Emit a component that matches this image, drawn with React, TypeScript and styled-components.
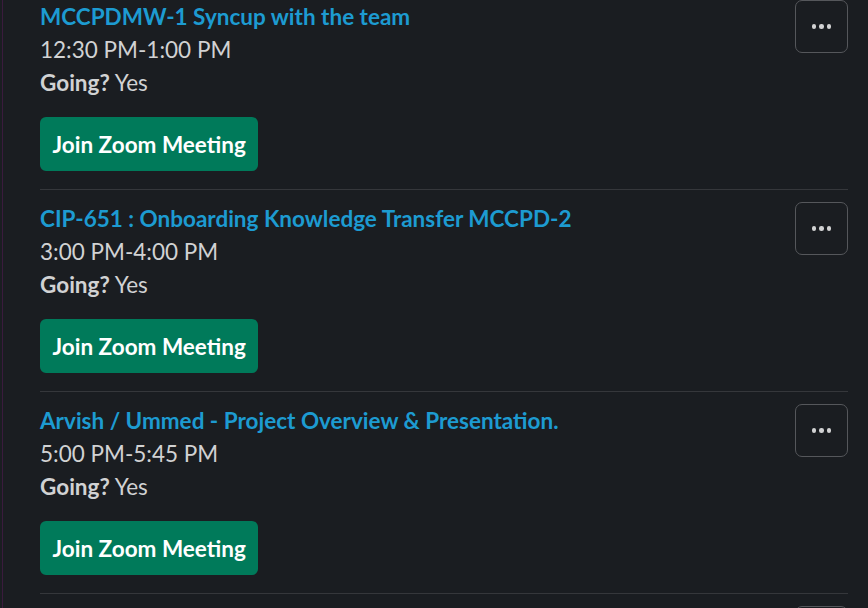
import React from "react";
import styled, { createGlobalStyle } from "styled-components";

const Global = createGlobalStyle`
  html, body { margin: 0; padding: 0; background: #1a1d21; overflow: hidden; }
  body { font-family: Lato, "Noto Sans", sans-serif; }
`;

const Root = styled.div`
  height: 608px;
  padding-left: 2px;
  background: #1a1d21;
  overflow: hidden;
`;

const Pane = styled.div`
  height: 100%;
  border-left: 1px solid #3a1b3d;
  padding: 0 20px 0 37px;
  display: flex;
  flex-direction: column;
`;

const Item = styled.div<{ $first?: boolean }>`
  display: flex;
  align-items: flex-start;
  gap: 12px;
  padding: ${(p) => (p.$first ? "0" : "12px")} 0 18px;
  border-bottom: 1px solid #35373b;
`;

const Body = styled.div`
  flex: 1;
  display: flex;
  flex-direction: column;
  align-items: flex-start;
`;

const Title = styled.a`
  font-size: 22.5px;
  line-height: 33px;
  font-weight: 700;
  color: #1d9bd1;
  text-decoration: none;
`;

const Line = styled.div`
  font-size: 22.5px;
  line-height: 33px;
  color: #d1d2d3;
`;

const Bold = styled.b`
  font-weight: 700;
`;

const JoinButton = styled.button`
  margin-top: 18px;
  height: 54px;
  padding: 0 12.5px;
  border: none;
  border-radius: 6px;
  background: #007a5a;
  color: #ffffff;
  font-family: Lato, "Noto Sans", sans-serif;
  font-size: 22.5px;
  font-weight: 700;
  cursor: pointer;
`;

const MoreButton = styled.button`
  flex: none;
  width: 53px;
  height: 53px;
  border: 1.5px solid #55575b;
  border-radius: 7px;
  background: transparent;
  display: flex;
  align-items: center;
  justify-content: center;
  gap: 3px;
  padding: 0;
`;

const Dot = styled.span`
  width: 4.5px;
  height: 4.5px;
  border-radius: 50%;
  background: #d1d2d3;
`;

const events = [
  { title: "MCCPDMW-1 Syncup with the team", time: "12:30 PM-1:00 PM" },
  { title: "CIP-651 : Onboarding Knowledge Transfer MCCPD-2", time: "3:00 PM-4:00 PM" },
  { title: "Arvish / Ummed - Project Overview & Presentation.", time: "5:00 PM-5:45 PM" },
  { title: "Daily Standup", time: "6:00 PM-6:15 PM" },
];

export default function App() {
  return (
    <>
      <Global />
      <Root>
        <Pane>
          {events.map((e, i) => (
            <Item key={i} $first={i === 0}>
              <Body>
                <Title href="#">{e.title}</Title>
                <Line>{e.time}</Line>
                <Line>
                  <Bold>Going?</Bold> Yes
                </Line>
                <JoinButton>Join Zoom Meeting</JoinButton>
              </Body>
              <MoreButton aria-label="More actions">
                <Dot />
                <Dot />
                <Dot />
              </MoreButton>
            </Item>
          ))}
        </Pane>
      </Root>
    </>
  );
}
